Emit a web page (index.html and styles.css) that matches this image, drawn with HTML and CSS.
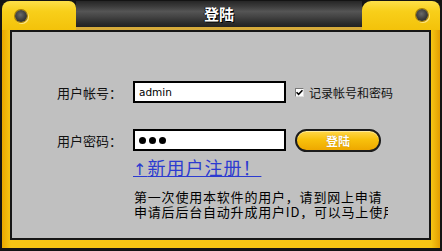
FILE: index.html
```html
<!DOCTYPE html>
<html lang="zh-CN">
<head>
<meta charset="utf-8">
<title>登陆</title>
<link rel="stylesheet" href="styles.css">
</head>
<body>
<div class="window">
  <div class="top">
    <div class="tab tab-left"><span class="screw"></span></div>
    <div class="titlebar"><span class="title">登陆</span></div>
    <div class="tab tab-right"><span class="screw"></span></div>
  </div>
  <div class="body">
    <div class="panel">
      <div class="row">
        <span class="label">用户帐号：</span>
        <div class="field"><span class="field-text">admin</span></div>
        <label class="remember"><span class="checkbox"><svg width="7" height="7" viewBox="0 0 7 7"><path d="M0.5 3.2 L2.6 5.3 L6.5 1.2" fill="none" stroke="#000" stroke-width="1.6"/></svg></span>记录帐号和密码</label>
      </div>
      <div class="row">
        <span class="label">用户密码：</span>
        <div class="field"><span class="dot"></span><span class="dot"></span><span class="dot"></span></div>
        <button class="btn">登陆</button>
      </div>
      <a class="register" href="#"><span class="arrow">↑</span>新用户注册！</a>
      <div class="note">
        <span class="note-line">第一次使用本软件的用户，请到网上申请</span>
        <span class="note-line">申请后后台自动升成用户ID，可以马上使用</span>
      </div>
    </div>
  </div>
</div>
</body>
</html>
```
FILE: styles.css
```css
* { box-sizing: border-box; }
html, body { margin: 0; padding: 0; background: #111; }
body { width: 442px; height: 251px; overflow: hidden; font-family: "Noto Sans CJK SC", "Noto Sans", sans-serif; }

.window {
  width: 442px;
  height: 251px;
  background: #141414;
  display: flex;
  flex-direction: column;
}

.top {
  display: flex;
  height: 30px;
  margin: 0 2px;
}
.tab {
  margin-top: 1px;
  height: 29px;
  background: linear-gradient(#fde04a 0%, #f8cf1a 35%, #f3c20a 100%);
  display: flex;
}
.tab-left {
  width: 74px;
  border-radius: 8px 7px 0 0;
  padding: 9px 0 0 13px;
}
.tab-right {
  width: 78px;
  border-radius: 9px 8px 0 0;
  padding: 8px 12px 0 0;
  justify-content: flex-end;
}
.screw {
  width: 12px;
  height: 12px;
  border-radius: 50%;
  background: radial-gradient(circle at 45% 40%, #6a6a6a 0%, #3c3c3c 55%, #1e1e1e 100%);
  box-shadow: 0 0 0 1px #a77f00, 1px 1px 0 1px #ffe680;
}

.titlebar {
  flex: 1;
  margin-top: 1px;
  height: 29px;
  background: linear-gradient(#262626 0%, #3b3b3b 20%, #555 40%, #444 60%, #2c2c2c 85%, #222 100%);
  border-bottom: 3px solid #d6aa3a;
  display: flex;
  justify-content: center;
  align-items: center;
}
.title {
  color: #fff;
  font-size: 15px;
  font-weight: bold;
  line-height: 18px;
  margin-top: -1px;
  text-shadow: 1px 1px 0 #000, -1px 0 0 #111;
}

.body {
  flex: 1;
  margin: 0 2px 3px;
  padding: 0 9px 8px 8px;
  background: linear-gradient(90deg, #e9a800 0%, #f6c514 2%, #f6c514 98%, #e39e00 100%);
}
.panel {
  height: 100%;
  background: #c0c0c0;
  border: 2px solid #161616;
  padding: 49px 0 0 45px;
  display: flex;
  flex-direction: column;
  align-items: flex-start;
}

.row {
  display: flex;
  align-items: center;
  height: 22px;
}
.row + .row { margin-top: 26px; }

.label {
  width: 67px;
  margin-right: 9px;
  font-size: 13px;
  color: #111;
  white-space: nowrap;
}
.field {
  width: 153px;
  height: 22px;
  background: #fff;
  border: 2px solid #000;
  display: flex;
  align-items: center;
  padding-left: 4px;
  gap: 3px;
}
.field-text {
  font-family: "DejaVu Sans", sans-serif;
  font-size: 10.5px;
  color: #000;
}
.dot {
  width: 7px;
  height: 7px;
  border-radius: 50%;
  background: #000;
}

.remember {
  margin-left: 9px;
  display: flex;
  align-items: center;
  font-size: 12px;
  color: #111;
  white-space: nowrap;
}
.checkbox {
  width: 9px;
  height: 9px;
  background: #fff;
  border: 1px solid #7a7a7a;
  border-right-color: #ddd;
  border-bottom-color: #ddd;
  margin-right: 5px;
  display: flex;
  align-items: center;
  justify-content: center;
}
.checkbox svg { display: block; }

.btn {
  margin-left: 9px;
  width: 86px;
  height: 23px;
  border: 2px solid #1c1c1c;
  border-radius: 12px;
  background: linear-gradient(#ffd84a 0%, #f8c10c 45%, #eea800 100%);
  color: #fff;
  font-family: "Noto Sans CJK SC", sans-serif;
  font-weight: bold;
  font-size: 12px;
  line-height: 17px;
  padding: 0;
  text-shadow: 0 0 1px #b07a00;
  box-shadow: inset 0 1px 0 #ffeb9a;
}

.register {
  margin: 5px 0 0 76px;
  color: #2c3bd0;
  font-size: 18px;
  line-height: 22px;
  letter-spacing: 1px;
  text-decoration: underline;
  white-space: nowrap;
}
.arrow {
  font-family: "DejaVu Sans", sans-serif;
  font-size: 16px;
}

.note {
  margin: 8px 0 0 77px;
  width: 254px;
  overflow: hidden;
  font-size: 13px;
  line-height: 15px;
  letter-spacing: 0.8px;
  color: #000;
}
.note-line {
  display: block;
  white-space: nowrap;
}
```
